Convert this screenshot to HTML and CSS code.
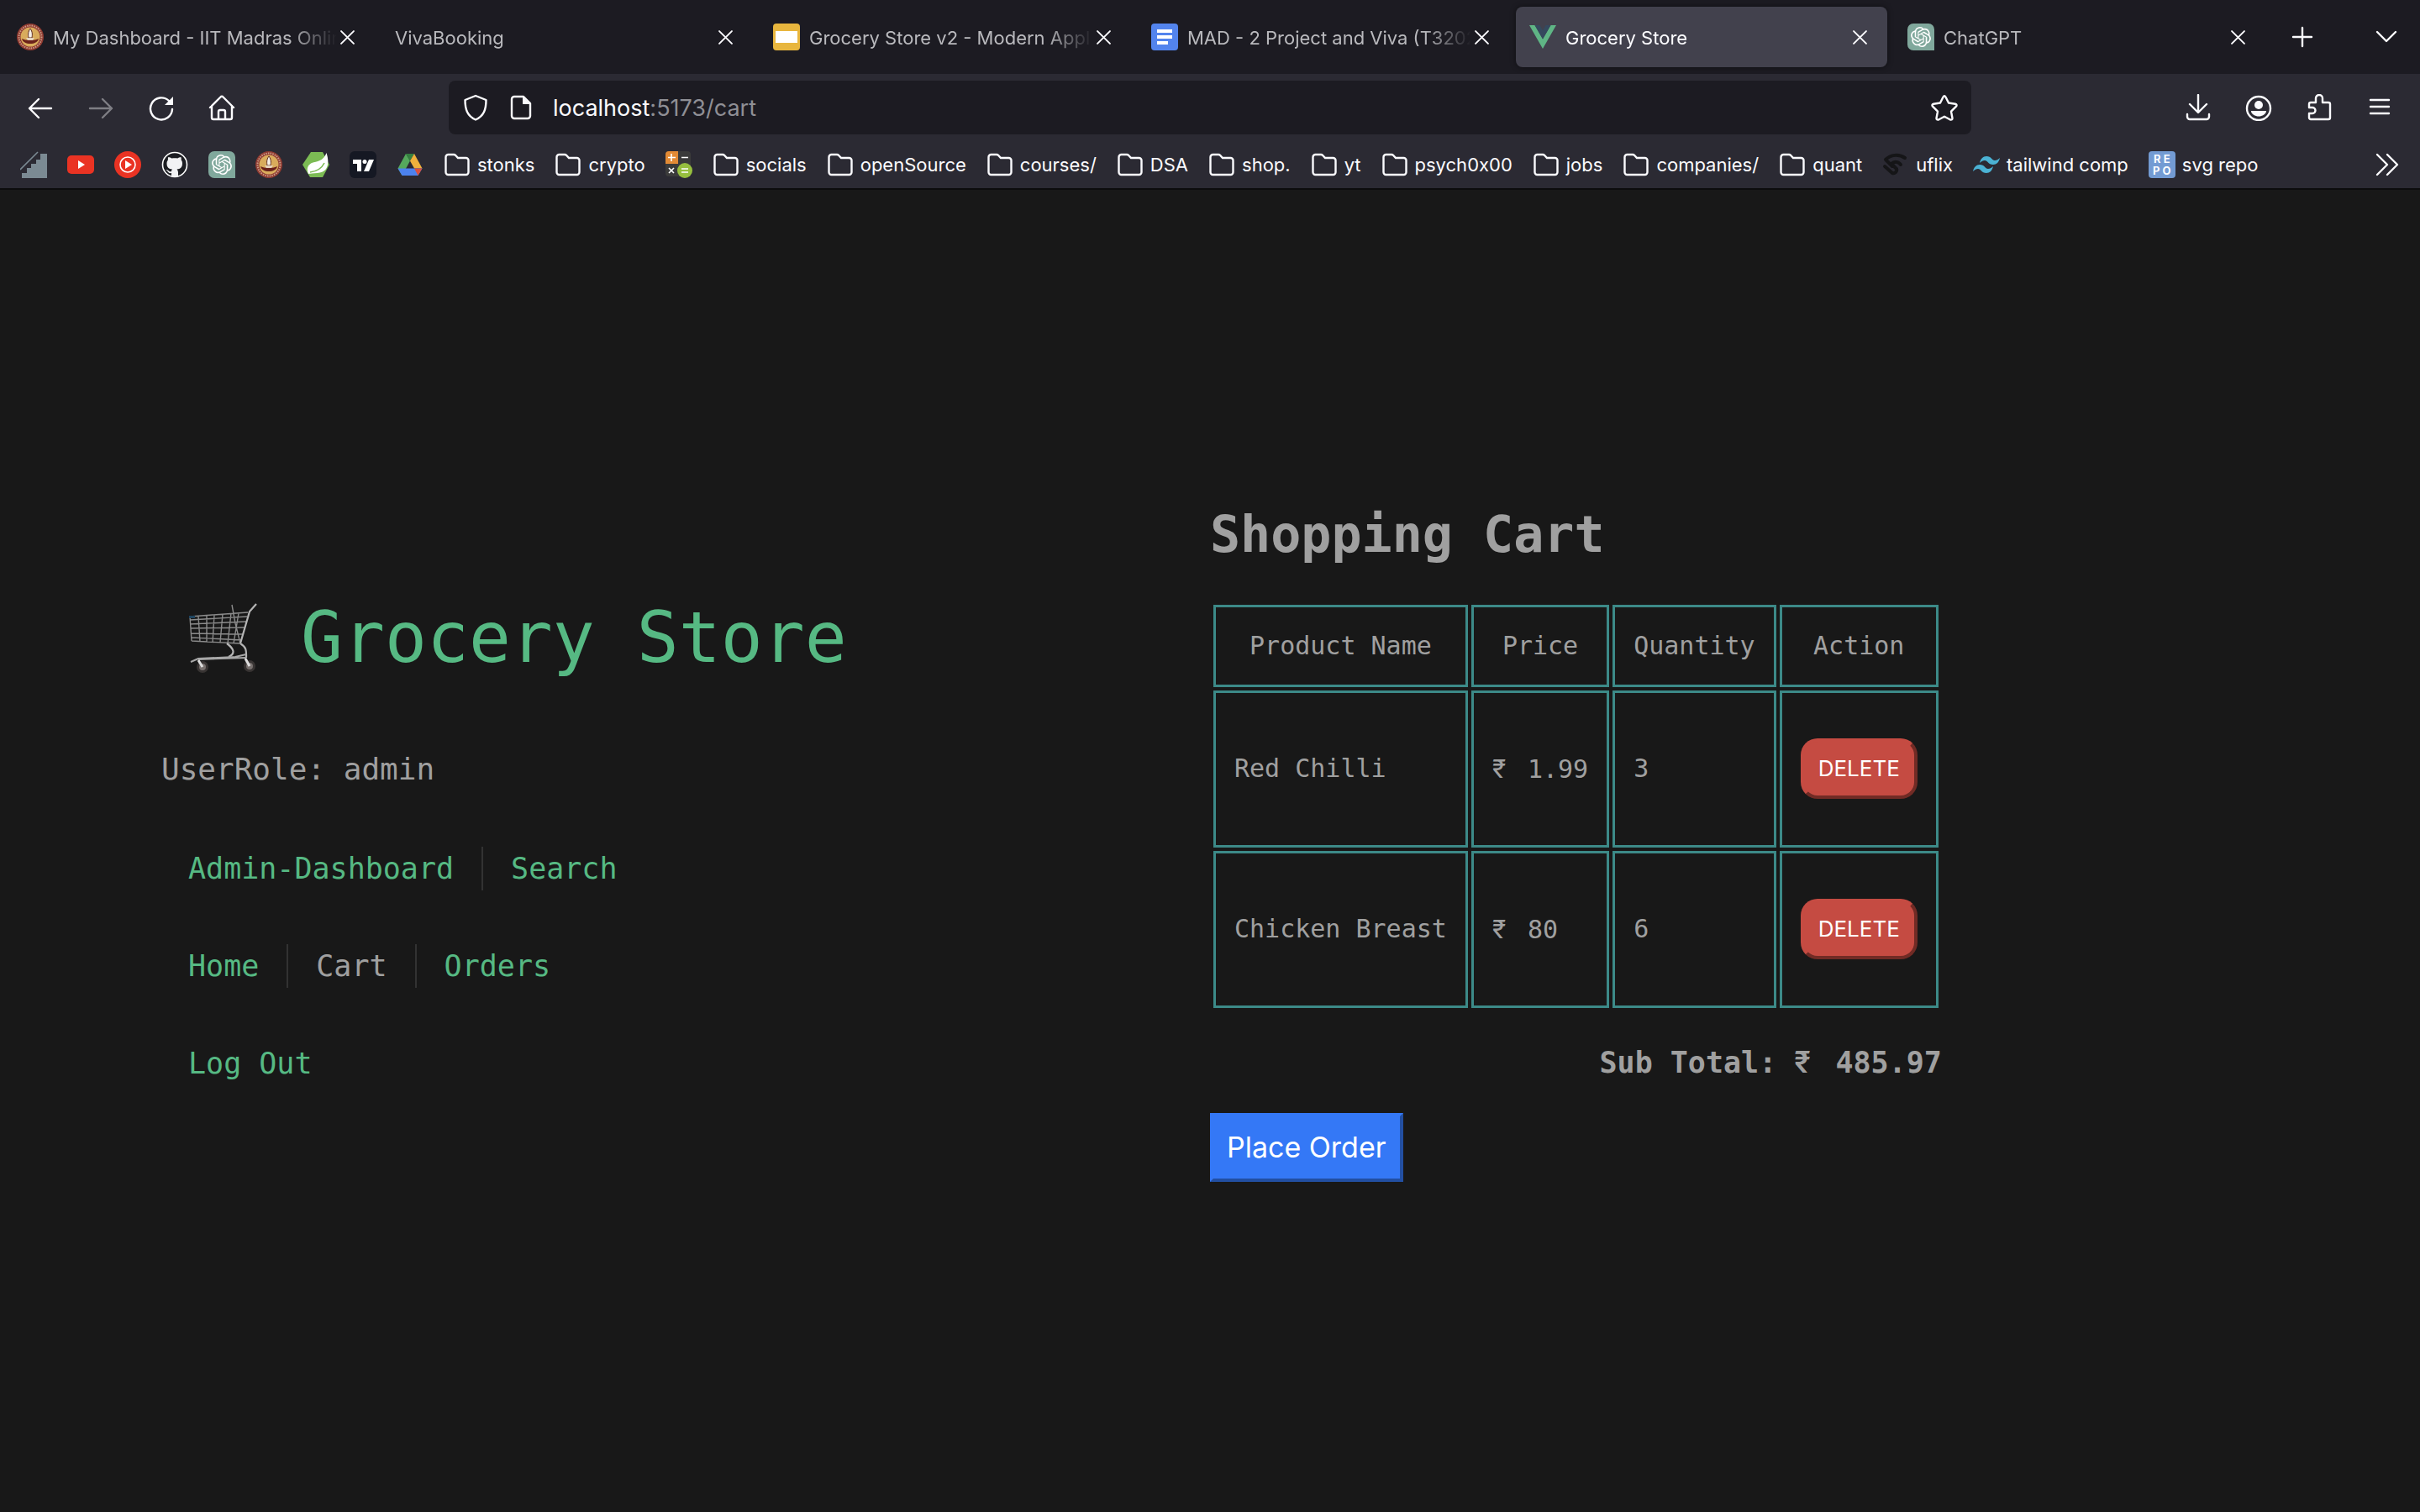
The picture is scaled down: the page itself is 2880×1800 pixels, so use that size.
FILE: index.html
```html
<!DOCTYPE html>
<html lang="en">
<head>
<meta charset="utf-8">
<title>Grocery Store</title>
<link rel="stylesheet" href="styles.css">
</head>
<body>
<svg class="defs" aria-hidden="true">
  <symbol id="x" viewBox="0 0 16 16"><path d="M1 1l14 14M15 1L1 15" fill="none" stroke="#fbfbfe" stroke-width="1.8" stroke-linecap="round"/></symbol>
  <symbol id="folder" viewBox="0 0 32 32"><path d="M2.500 25V7a3 3 0 0 1 3-3h6.500a3 3 0 0 1 2.200 1L17 8h9.500a3 3 0 0 1 3 3v14a3 3 0 0 1-3 3h-21a3 3 0 0 1-3-3z" fill="none" stroke="#fbfbfe" stroke-width="2.4"/></symbol>
  <symbol id="iit" viewBox="0 0 32 32"><circle cx="16" cy="16" r="16" fill="#8f3a31"/><circle cx="16" cy="16" r="13.5" fill="none" stroke="#c99a85" stroke-width="2" stroke-dasharray="1.5 1.2"/><circle cx="16" cy="16" r="11.5" fill="#d9ac5c"/><path d="M16 6c3 4 2.500 8 2 11h-4c-.5-3-1-7 2-11z" fill="#f6efe6" stroke="#5b2a22" stroke-width="1"/><path d="M6 18c4 2.500 16 2.500 20 0-1 4-5 6-10 6s-9-2-10-6z" fill="#6b211b"/><path d="M11 17h10l-2 3h-6z" fill="#e4d2bd"/></symbol>
  <symbol id="gpt" viewBox="0 0 32 32"><path d="M7 0h18a7 7 0 0 1 7 7v25H7a7 7 0 0 1-7-7V7a7 7 0 0 1 7-7z" fill="#80a89c"/><path transform="translate(4 4)" fill="#fff" d="M22.280 9.820a5.980 5.980 0 0 0-.52-4.910 6.050 6.050 0 0 0-6.510-2.900A6.070 6.070 0 0 0 4.980 4.180a5.980 5.980 0 0 0-4 2.900 6.050 6.050 0 0 0 .74 7.100 5.980 5.980 0 0 0 .51 4.910 6.050 6.050 0 0 0 6.520 2.900A5.980 5.980 0 0 0 13.260 24a6.060 6.060 0 0 0 5.770-4.210 5.990 5.990 0 0 0 4-2.900 6.060 6.060 0 0 0-.75-7.070zm-9.020 12.610a4.480 4.480 0 0 1-2.880-1.040l.14-.08 4.780-2.760a.8.8 0 0 0 .39-.68v-6.740l2.020 1.170a.07.07 0 0 1 .04.05v5.580a4.500 4.500 0 0 1-4.490 4.500zM3.600 18.300a4.470 4.470 0 0 1-.53-3.010l.14.08 4.780 2.760a.77.77 0 0 0 .78 0l5.840-3.370v2.330a.08.08 0 0 1-.03.06l-4.840 2.800A4.500 4.500 0 0 1 3.600 18.300zM2.340 7.900a4.490 4.490 0 0 1 2.370-1.980v5.680a.77.77 0 0 0 .38.68l5.820 3.350-2.020 1.170a.08.08 0 0 1-.07 0l-4.830-2.790A4.500 4.500 0 0 1 2.340 7.870zm16.600 3.850L13.100 8.360l2.020-1.160a.08.08 0 0 1 .07 0l4.830 2.790a4.490 4.490 0 0 1-.68 8.100v-5.670a.79.79 0 0 0-.4-.67zm2.010-3.020l-.14-.09-4.770-2.780a.78.78 0 0 0-.79 0L9.410 9.230V6.900a.07.07 0 0 1 .03-.06l4.830-2.790a4.500 4.500 0 0 1 6.680 4.660zM8.310 12.860l-2.020-1.160a.08.08 0 0 1-.04-.06V6.070a4.500 4.500 0 0 1 7.380-3.450l-.14.08-4.780 2.760a.8.8 0 0 0-.39.68zm1.100-2.370l2.600-1.500 2.610 1.500v3l-2.600 1.500-2.610-1.500z"/></symbol>
</svg>

<header class="browser">
  <div class="tabs">
    <div class="tab"><svg class="icon"><use href="#iit"/></svg><span class="title">My Dashboard - IIT Madras Onlin</span><button class="close" aria-label="Close tab"><svg><use href="#x"/></svg></button></div>
    <div class="tab"><span class="title">VivaBooking</span><button class="close" aria-label="Close tab"><svg><use href="#x"/></svg></button></div>
    <div class="tab"><svg class="icon" viewBox="0 0 32 32"><rect width="32" height="32" rx="4" fill="#e8b63e"/><path d="M3 9h26v14H3z" fill="#fff"/></svg><span class="title">Grocery Store v2 - Modern Appl</span><button class="close" aria-label="Close tab"><svg><use href="#x"/></svg></button></div>
    <div class="tab"><svg class="icon" viewBox="0 0 32 32"><rect width="32" height="32" rx="4" fill="#5384ed"/><path d="M7 7h18v4H7zM7 14h18v4H7zM7 21h13v4H7z" fill="#fff"/></svg><span class="title">MAD - 2 Project and Viva (T3202</span><button class="close" aria-label="Close tab"><svg><use href="#x"/></svg></button></div>
    <div class="tab active"><svg class="icon" viewBox="0 0 32 32"><path d="M0 2h6.500L16 18.500 25.500 2H32L16 30z" fill="#5fb585"/><path d="M6.500 2h6L16 8.200 19.500 2h6L16 18.500z" fill="#35495e"/></svg><span class="title">Grocery Store</span><button class="close" aria-label="Close tab"><svg><use href="#x"/></svg></button></div>
    <div class="tab"><svg class="icon"><use href="#gpt"/></svg><span class="title">ChatGPT</span><button class="close" aria-label="Close tab"><svg><use href="#x"/></svg></button></div>
    <button class="tool" aria-label="New tab"><svg viewBox="0 0 32 32"><path d="M16 5v22M5 16h22"/></svg></button>
    <button class="tool last" aria-label="List all tabs"><svg viewBox="0 0 32 32"><path d="M5 10l11 11 11-11"/></svg></button>
  </div>

  <div class="toolbar">
    <button class="tool" aria-label="Back"><svg viewBox="0 0 32 32"><path d="M29 17H3M14 6L3 17l11 11"/></svg></button>
    <button class="tool dim" aria-label="Forward"><svg viewBox="0 0 32 32"><path d="M3 17h26M18 6l11 11-11 11"/></svg></button>
    <button class="tool" aria-label="Reload"><svg viewBox="0 0 32 32"><path d="M29 18A13 13 0 1 1 25 8"/><path class="solid" d="M30 3v10H20z"/></svg></button>
    <button class="tool" aria-label="Home"><svg viewBox="0 0 32 32"><path d="M2 16L14.500 3.500a2 2 0 0 1 3 0L30 16M4 14v14a2 2 0 0 0 2 2h20a2 2 0 0 0 2-2V14M12 30V21a2 2 0 0 1 2-2h4a2 2 0 0 1 2 2v9"/></svg></button>
    <div class="urlbar">
      <button class="tool" aria-label="Tracking protection"><svg viewBox="0 0 32 32"><path d="M16 2L3.500 7c0 11 2.500 19 12.500 23.500C26 26 28.500 18 28.500 7z"/></svg></button>
      <button class="tool" aria-label="Site information"><svg viewBox="0 0 32 32"><path d="M19 3H8a3 3 0 0 0-3 3v20a3 3 0 0 0 3 3h16a3 3 0 0 0 3-3V11z"/><path class="solid" d="M18 3v9h9z"/></svg></button>
      <span class="url">localhost<span class="rest">:5173/cart</span></span>
      <button class="tool" aria-label="Bookmark this page"><svg viewBox="0 0 32 32"><path d="M14.500 3.500q1.500-2.500 3 0l3.500 7 8 1.200q2.500.8 1 3l-6 6 1.500 8q0 2.500-2.500 1.800l-7-3.800-7 3.800q-2.500.7-2.500-1.800l1.500-8-6-6q-1.500-2.200 1-3l8-1.200z"/></svg></button>
    </div>
    <button class="tool" aria-label="Downloads"><svg viewBox="0 0 32 32"><path d="M16 1v20M6 12l10 10 10-10M3 24v3a3 3 0 0 0 3 3h20a3 3 0 0 0 3-3v-3"/></svg></button>
    <button class="tool" aria-label="Account"><svg viewBox="0 0 32 32"><circle cx="16" cy="17" r="14"/><circle class="solid" cx="16" cy="13" r="5"/><path class="solid" d="M7 20h18c0 4-5 6.500-9 6.500S7 24 7 20z"/></svg></button>
    <button class="tool" aria-label="Extensions"><svg viewBox="0 0 32 32"><path d="M4 16v-4a2 2 0 0 1 2-2h6V5a4 4 0 0 1 8 0v5h7a2 2 0 0 1 2 2v16a2 2 0 0 1-2 2H6a2 2 0 0 1-2-2v-5h4a3 3 0 0 0 0-7z"/></svg></button>
    <button class="tool" aria-label="Menu"><svg viewBox="0 0 32 32"><path d="M5 7h22M5 15h22M5 23h22"/></svg></button>
  </div>

  <nav class="bookmarks" aria-label="Bookmarks">
    <a href="#" aria-label="Stairs"><svg class="icon" viewBox="0 0 32 32"><path d="M2 32v-6h6v-6h5v-5h6v-5h5V3h8v29z" fill="#7b8a93"/><path d="M0 22L21 1" stroke="#7b8a93" stroke-width="1.6"/></svg></a>
    <a href="#" aria-label="YouTube"><svg class="icon" viewBox="0 0 32 32"><rect y="5" width="32" height="22" rx="5" fill="#ea3323"/><path d="M13 11l8 5-8 5z" fill="#fff"/></svg></a>
    <a href="#" aria-label="YouTube Music"><svg class="icon" viewBox="0 0 32 32"><circle cx="16" cy="16" r="16" fill="#ea3323"/><circle cx="16" cy="16" r="9" fill="none" stroke="#fff" stroke-width="1.6"/><path d="M13 11l8 5-8 5z" fill="#fff"/></svg></a>
    <a href="#" aria-label="GitHub"><svg class="icon" viewBox="0 0 32 32"><circle cx="16" cy="16" r="14.5" fill="#1c1d22" stroke="#fff" stroke-width="1.6"/><path d="M12 30v-4c-4 1-4-3-7-4 3-.5 4 3 7 2 0-1 .5-2 1-2.500-4-.5-6.500-2-6.500-7 0-2 .5-3 1.500-4-.2-1-.2-2 .3-3.500 1.700 0 3 1 4 1.500 2.500-.5 5-.5 7 0 1-.5 2.400-1.500 4-1.500.5 1.500.5 2.500.3 3.500 1 1 1.400 2 1.400 4 0 5-2.500 6.500-6.500 7 .8.800 1.500 2 1.500 4v4.500c-2.500 1-5.500 1-8 0z" fill="#f2f2f4"/></svg></a>
    <a href="#" aria-label="ChatGPT"><svg class="icon"><use href="#gpt"/></svg></a>
    <a href="#" aria-label="IIT Madras"><svg class="icon"><use href="#iit"/></svg></a>
    <a href="#" aria-label="Spring"><svg class="icon" viewBox="0 0 32 32"><path d="M10 1h14l8 15-8 15H9L0 16z" fill="#7cbb54"/><path d="M28.500 2c4 12 2 24-11 24-5 0-8 1-10.500 1-2-4-2-10 4-13 6-2 14-2 17.500-12z" fill="#fff"/><path d="M9 25c9-1 14-5 17-11" fill="none" stroke="#7cbb54" stroke-width="1.6"/></svg></a>
    <a href="#" aria-label="TradingView"><svg class="icon" viewBox="0 0 32 32"><rect width="32" height="32" rx="6" fill="#151823"/><path d="M4 10h10v14H9v-9H4zM23 10h6l-6 14h-6z" fill="#fff"/><circle cx="18" cy="12.5" r="2.5" fill="#fff"/></svg></a>
    <a href="#" aria-label="Google Drive"><svg class="icon" viewBox="0 0 32 32"><path d="M11 3L1.500 20.500l5 8.500L16 11.500z" fill="#55a95c"/><path d="M11 3h10l-5 8.500z" fill="#348040"/><path d="M21 3l9.500 17.500H21l-5-9z" fill="#f0b03c"/><path d="M1.500 20.500h29l-5 8.500h-19z" fill="#4c82ee"/><path d="M21 20.500h9.500l-5 8.500z" fill="#d9503f"/></svg></a>
    <a href="#"><svg class="icon"><use href="#folder"/></svg>stonks</a>
    <a href="#"><svg class="icon"><use href="#folder"/></svg>crypto</a>
    <a href="#" aria-label="Calculator"><svg class="icon" viewBox="0 0 32 32"><rect width="30" height="30" rx="4" fill="#3b3b3b"/><path d="M4 0h11v15H0V4a4 4 0 0 1 4-4z" fill="#e28a35"/><path d="M7 3v9M3 7.500h9M19 7.500h8M4 20l6 6M10 20l-6 6" stroke="#fff" stroke-width="1.6"/><circle cx="23" cy="23" r="9" fill="#96bf3e"/><path d="M19 21h8M19 25h8" stroke="#fff" stroke-width="1.6"/></svg></a>
    <a href="#"><svg class="icon"><use href="#folder"/></svg>socials</a>
    <a href="#"><svg class="icon"><use href="#folder"/></svg>openSource</a>
    <a href="#"><svg class="icon"><use href="#folder"/></svg>courses/</a>
    <a href="#"><svg class="icon"><use href="#folder"/></svg>DSA</a>
    <a href="#"><svg class="icon"><use href="#folder"/></svg>shop.</a>
    <a href="#"><svg class="icon"><use href="#folder"/></svg>yt</a>
    <a href="#"><svg class="icon"><use href="#folder"/></svg>psych0x00</a>
    <a href="#"><svg class="icon"><use href="#folder"/></svg>jobs</a>
    <a href="#"><svg class="icon"><use href="#folder"/></svg>companies/</a>
    <a href="#"><svg class="icon"><use href="#folder"/></svg>quant</a>
    <a href="#"><svg class="icon" viewBox="0 0 32 32"><path d="M27 8C20 3 10 4 4 10l8 8M22 16c-3-4-8-4-11-1l6 6c1 3-2 6-5 5l-9-8" fill="none" stroke="#151517" stroke-width="4" stroke-linecap="round" stroke-linejoin="round"/></svg>uflix</a>
    <a href="#"><svg class="icon" viewBox="0 0 32 32"><path d="M8 14c1-5 4-8 8-8 6 0 6.500 5 10 5 2 0 4-1 6-3-1 5-4 8-8 8-6 0-6.500-5-10-5-2 0-4 1-6 3zM0 24c1-5 4-8 8-8 6 0 6.500 5 10 5 2 0 4-1 6-3-1 5-4 8-8 8-6 0-6.500-5-10-5-2 0-4 1-6 3z" fill="#4bb2d4"/></svg>tailwind comp</a>
    <a href="#"><span class="icon repo"><span>R E</span><span>P O</span></span>svg repo</a>
    <button class="tool last" aria-label="More bookmarks"><svg viewBox="0 0 32 32"><path d="M5 4l12 12L5 28M17 4l12 12-12 12"/></svg></button>
  </nav>
</header>

<main class="page">
  <section class="side">
    <h1 class="brand">
      <svg class="cart" viewBox="0 0 84 84" aria-hidden="true" fill="none"><g stroke="#8b8b8b" stroke-width="1.4"><path d="M2 16l69-5M2 20l68-4M2 25l67-3M3 30l64-1M3 36l63 1M4 41l60 3M4 45l58 3M2 16l2 29M12 15l2 31M22 15l0 32M31 14l-2 33M41 13l-3 34M51 12l-4 36M60 12l-6 36M52 2l4 22 6 24"/></g><path d="M1 15h7v3H1z" fill="#1f4560"/><path d="M81 1l-8 9-11 38M46 48c8 6 11 12 2 16M62 48c8 5 7 9 7 17" stroke="#b5b5b5" stroke-width="2.2"/><path d="M3 70l9-4 44-2 13-3M12 67l57-2" stroke="#a8a8a8" stroke-width="2"/><g fill="#77706e" stroke="#383433" stroke-width="3"><circle cx="17" cy="76" r="5.5"/><circle cx="73" cy="75" r="5.5"/></g><path d="M12 68l5 8M68 66l5 9" stroke="#ddd" stroke-width="3"/></svg>
      <span>Grocery Store</span>
    </h1>
    <p class="role">UserRole: admin</p>
    <nav class="menu" aria-label="Main">
      <div class="row"><a href="#">Admin-Dashboard</a><a href="#">Search</a></div>
      <div class="row"><a href="#">Home</a><a href="#" class="current" aria-current="page">Cart</a><a href="#">Orders</a></div>
      <div class="row"><a href="#">Log Out</a></div>
    </nav>
  </section>

  <section class="content">
    <h2>Shopping Cart</h2>
    <div class="order">
      <table>
        <thead><tr><th>Product Name</th><th>Price</th><th>Quantity</th><th>Action</th></tr></thead>
        <tbody>
          <tr><td>Red Chilli</td><td><span class="rupee">₹</span> 1.99</td><td>3</td><td><button class="delete">DELETE</button></td></tr>
          <tr><td>Chicken Breast</td><td><span class="rupee">₹</span> 80</td><td>6</td><td><button class="delete">DELETE</button></td></tr>
        </tbody>
      </table>
      <p class="total">Sub Total: <span class="rupee">₹</span> 485.97</p>
      <button class="place">Place Order</button>
    </div>
  </section>
</main>
</body>
</html>
```
FILE: styles.css
```css
* { box-sizing: border-box; }
body {
  margin: 0;
  min-height: 100vh;
  display: flex;
  flex-direction: column;
  background: #181818;
  color: #a0a0a0;
  font-family: "DejaVu Sans Mono", monospace;
}
.defs { position: absolute; width: 0; height: 0; }
button { border: 0; padding: 0; background: none; color: inherit; font: inherit; }
a { color: inherit; text-decoration: none; }
svg { display: block; }

/* Browser bars */
.browser {
  background: #2b2a33;
  color: #fbfbfe;
  font: 22px/32px Inter, sans-serif;
  border-bottom: 2px solid #0c0c0d;
}
.icon { flex: none; width: 32px; height: 32px; }
.tabs { display: flex; align-items: center; height: 88px; padding-right: 24px; background: #1c1b22; }
.tab {
  display: flex;
  align-items: center;
  flex: 0 1 442px;
  min-width: 0;
  height: 72px;
  margin: 0 4px;
  padding: 0 24px 0 16px;
  border-radius: 8px;
  color: #b9b9bd;
}
.tab .icon { margin-right: 11px; }
.tab .title {
  flex: 1;
  padding-top: 2px;
  overflow: hidden;
  white-space: nowrap;
  -webkit-mask-image: linear-gradient(to left, transparent, #000 56px);
  mask-image: linear-gradient(to left, transparent, #000 56px);
}
.tab.active { background: #42414d; color: #fbfbfe; box-shadow: 0 0 6px rgba(0, 0, 0, .5); }
.close { flex: none; margin-left: 4px; }
.close svg { width: 17px; height: 17px; }
.tool { flex: none; width: 32px; height: 32px; }
.tool svg { width: 32px; height: 32px; fill: none; stroke: #fbfbfe; stroke-width: 2.4; stroke-linecap: round; stroke-linejoin: round; }
.tool svg .solid { fill: #fbfbfe; stroke: none; }
.tool.dim { opacity: .4; }
.tool.last { margin-left: auto; }
.tabs > .tool { margin-left: 24px; }
.tabs > .tool.last { margin-left: auto; }

.toolbar { display: flex; align-items: center; gap: 40px; height: 80px; padding: 0 32px; }
.urlbar {
  display: flex;
  align-items: center;
  flex: 0 1 1812px;
  gap: 22px;
  height: 64px;
  margin: 0 auto 0 214px;
  padding: 0 16px;
  border-radius: 8px;
  background: #1c1b22;
  font-size: 27px;
}
.url { flex: 1; padding-top: 2px; }
.rest { color: #8f8f95; }

.bookmarks { display: flex; align-items: center; gap: 24px; height: 56px; padding: 0 24px; }
.bookmarks a { display: flex; align-items: center; gap: 8px; white-space: nowrap; }
.repo {
  display: flex;
  flex-direction: column;
  align-items: center;
  justify-content: center;
  border-radius: 4px;
  background: #739bd3;
  font: bold 13px/14px Inter, sans-serif;
}

/* Store page */
.page {
  flex: 1;
  display: grid;
  grid-template-columns: 1fr 1fr;
  align-items: center;
  padding: 0 192px 32px;
}
.side { padding: 8px 64px 0 0; }
.brand {
  display: flex;
  align-items: center;
  gap: 50px;
  margin: 0;
  padding-left: 32px;
  font-size: 83px;
  line-height: 100px;
  font-weight: 400;
  color: #56b983;
}
.cart { width: 84px; height: 84px; }
.role { margin: 78px 0 64px; font-size: 36px; line-height: 56px; }
.menu { display: grid; gap: 64px; font-size: 35px; line-height: 52px; }
.row { display: flex; }
.row a { padding: 0 33px; border-left: 2px solid #323232; color: #56b983; }
.row a:first-child { padding-left: 32px; border-left: 0; }
.row .current { color: #a0a0a0; }

h2 { margin: 0 0 32px; font-size: 60px; line-height: 96px; }
.order { width: fit-content; }
table { border-collapse: separate; border-spacing: 4px; font-size: 30px; line-height: 48px; }
th, td { padding: 22px; border: 3px solid #3c8a88; text-align: left; }
th { font-weight: 400; text-align: center; }
td { height: 187px; }
.rupee { display: inline-block; width: 24px; font-family: Inter, sans-serif; font-weight: 400; text-align: left; }
.delete {
  display: block;
  padding: 11px 17px;
  border: 4px outset #c54b42;
  border-radius: 20px;
  background: #c54b42;
  color: #fff;
  font: 26px/42px Inter, sans-serif;
}
.total { margin: 32px 0; font-size: 35px; line-height: 56px; font-weight: 700; text-align: right; }
.total .rupee { width: 28px; font-weight: 600; }
.place {
  padding: 13px 16px;
  border: 4px outset #3478f6;
  background: #3478f6;
  color: #fff;
  font: 34px/48px Inter, sans-serif;
}
```
